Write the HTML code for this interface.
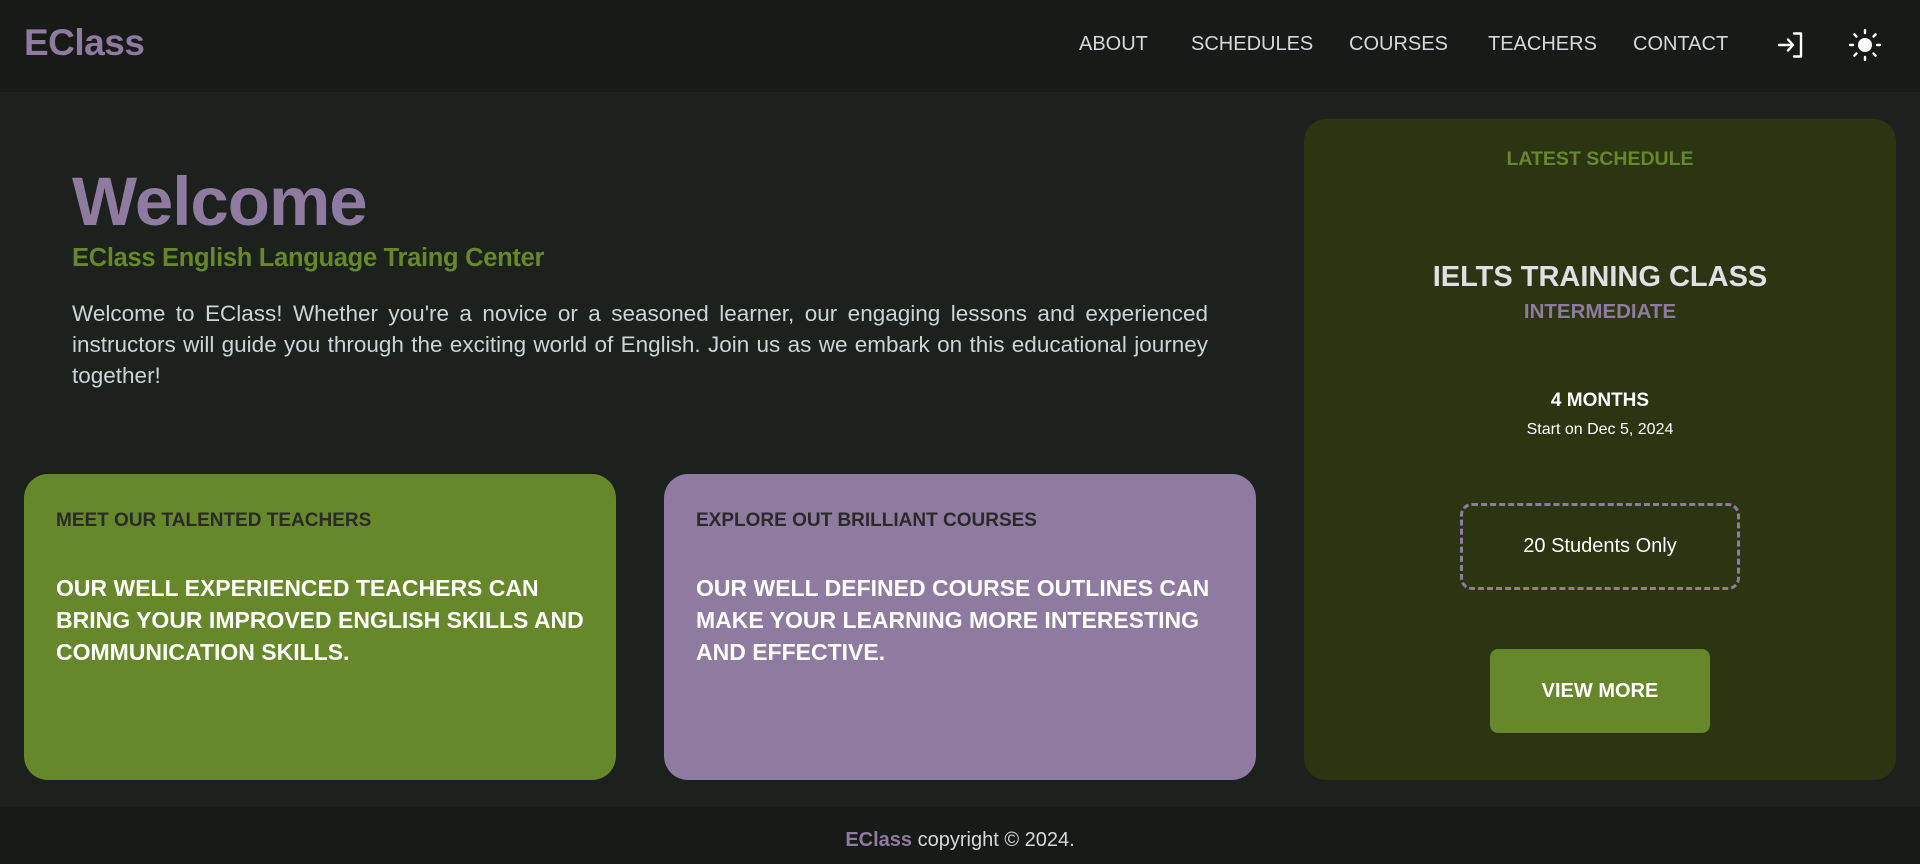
<!DOCTYPE html>
<html><head><style>
*{margin:0;padding:0;box-sizing:border-box}
body{width:1920px;height:864px;background:#1c211d;font-family:"Liberation Sans",sans-serif;position:relative;overflow:hidden}
.hdr{position:absolute;left:0;top:0;width:1920px;height:92px;background:#171a17}
.logo{position:absolute;left:24px;top:22px;font-size:37px;font-weight:bold;color:#8f7aa0;letter-spacing:-0.5px}
.nav{position:absolute;top:33px;font-size:20px;color:#d4d8dc}
.abs{position:absolute}
h1{position:absolute;left:72px;top:162px;font-size:69px;color:#8f7aa0;font-weight:bold;letter-spacing:-1px}
.sub{position:absolute;left:72px;top:244px;font-size:25.5px;font-weight:bold;color:#66882a;letter-spacing:-0.3px}
.para{position:absolute;left:72px;top:298px;width:1136px;font-size:22.5px;line-height:31px;color:#cdd3d8;text-align:justify}
.card{position:absolute;top:474px;width:592px;height:306px;border-radius:24px;padding:36px 32px}
.card .t{font-size:19px;font-weight:bold;color:#2a2a2a;margin-top:0}
.card .b{font-size:23px;font-weight:bold;color:#fff;line-height:32px;margin-top:40px}
.right{position:absolute;left:1304px;top:119px;width:592px;height:661px;border-radius:22px;background:#2b3512;text-align:center}
.footer{position:absolute;left:0;top:807px;width:1920px;height:57px;background:#171a17;text-align:center;font-size:20px;color:#d4d8dc;padding-top:22px}
</style></head><body>
<div class="hdr">
<div class="logo">EClass</div>
<div class="nav" style="left:1079px">ABOUT</div>
<div class="nav" style="left:1191px">SCHEDULES</div>
<div class="nav" style="left:1349px">COURSES</div>
<div class="nav" style="left:1488px">TEACHERS</div>
<div class="nav" style="left:1633px">CONTACT</div>
<svg class="abs" style="left:1776px;top:30px" width="30" height="30" viewBox="0 0 30 30" fill="none" stroke="#fff" stroke-width="2.4" stroke-linecap="round" stroke-linejoin="round"><path d="M3 15H17M12 9.5L17 15L12 20.5M18 3.5H25V26.5H18"/></svg>
<svg class="abs" style="left:1848px;top:28px" width="34" height="34" viewBox="0 0 34 34" fill="#fff" stroke="#fff" stroke-width="2.4" stroke-linecap="round"><circle cx="17" cy="17" r="7" stroke="none"/><path d="M17 2V5M17 29V32M2 17H5M29 17H32M6.4 6.4L8.5 8.5M25.5 25.5L27.6 27.6M6.4 27.6L8.5 25.5M25.5 8.5L27.6 6.4"/></svg>
</div>
<h1>Welcome</h1>
<div class="sub">EClass English Language Traing Center</div>
<div class="para">Welcome to EClass! Whether you're a novice or a seasoned learner, our engaging lessons and experienced instructors will guide you through the exciting world of English. Join us as we embark on this educational journey together!</div>
<div class="card" style="left:24px;background:#66882a"><div class="t">MEET OUR TALENTED TEACHERS</div><div class="b">OUR WELL EXPERIENCED TEACHERS CAN BRING YOUR IMPROVED ENGLISH SKILLS AND COMMUNICATION SKILLS.</div></div>
<div class="card" style="left:664px;background:#8f7aa0"><div class="t">EXPLORE OUT BRILLIANT COURSES</div><div class="b">OUR WELL DEFINED COURSE OUTLINES CAN MAKE YOUR LEARNING MORE INTERESTING AND EFFECTIVE.</div></div>
<div class="right">
<div class="abs" style="left:0;width:592px;top:29px;font-size:19.5px;font-weight:bold;color:#66882a">LATEST SCHEDULE</div>
<div class="abs" style="left:0;width:592px;top:142px;font-size:29px;font-weight:bold;color:#dde1e6">IELTS TRAINING CLASS</div>
<div class="abs" style="left:0;width:592px;top:181px;font-size:20.5px;font-weight:bold;color:#8f7aa0">INTERMEDIATE</div>
<div class="abs" style="left:0;width:592px;top:271px;font-size:19px;font-weight:bold;color:#fff">4 MONTHS</div>
<div class="abs" style="left:0;width:592px;top:302px;font-size:16px;color:#fff">Start on Dec 5, 2024</div>
<div class="abs" style="left:156px;top:384px;width:280px;height:87px;border:3px dashed #8f7aa0;border-radius:12px;color:#fff;font-size:20px;line-height:81px">20 Students Only</div>
<div class="abs" style="left:186px;top:530px;width:220px;height:84px;background:#66882a;border-radius:8px;color:#fff;font-size:20px;font-weight:bold;line-height:84px">VIEW MORE</div>
</div>
<div class="footer"><b style="color:#8f7aa0">EClass</b> copyright © 2024.</div>
</body></html>
